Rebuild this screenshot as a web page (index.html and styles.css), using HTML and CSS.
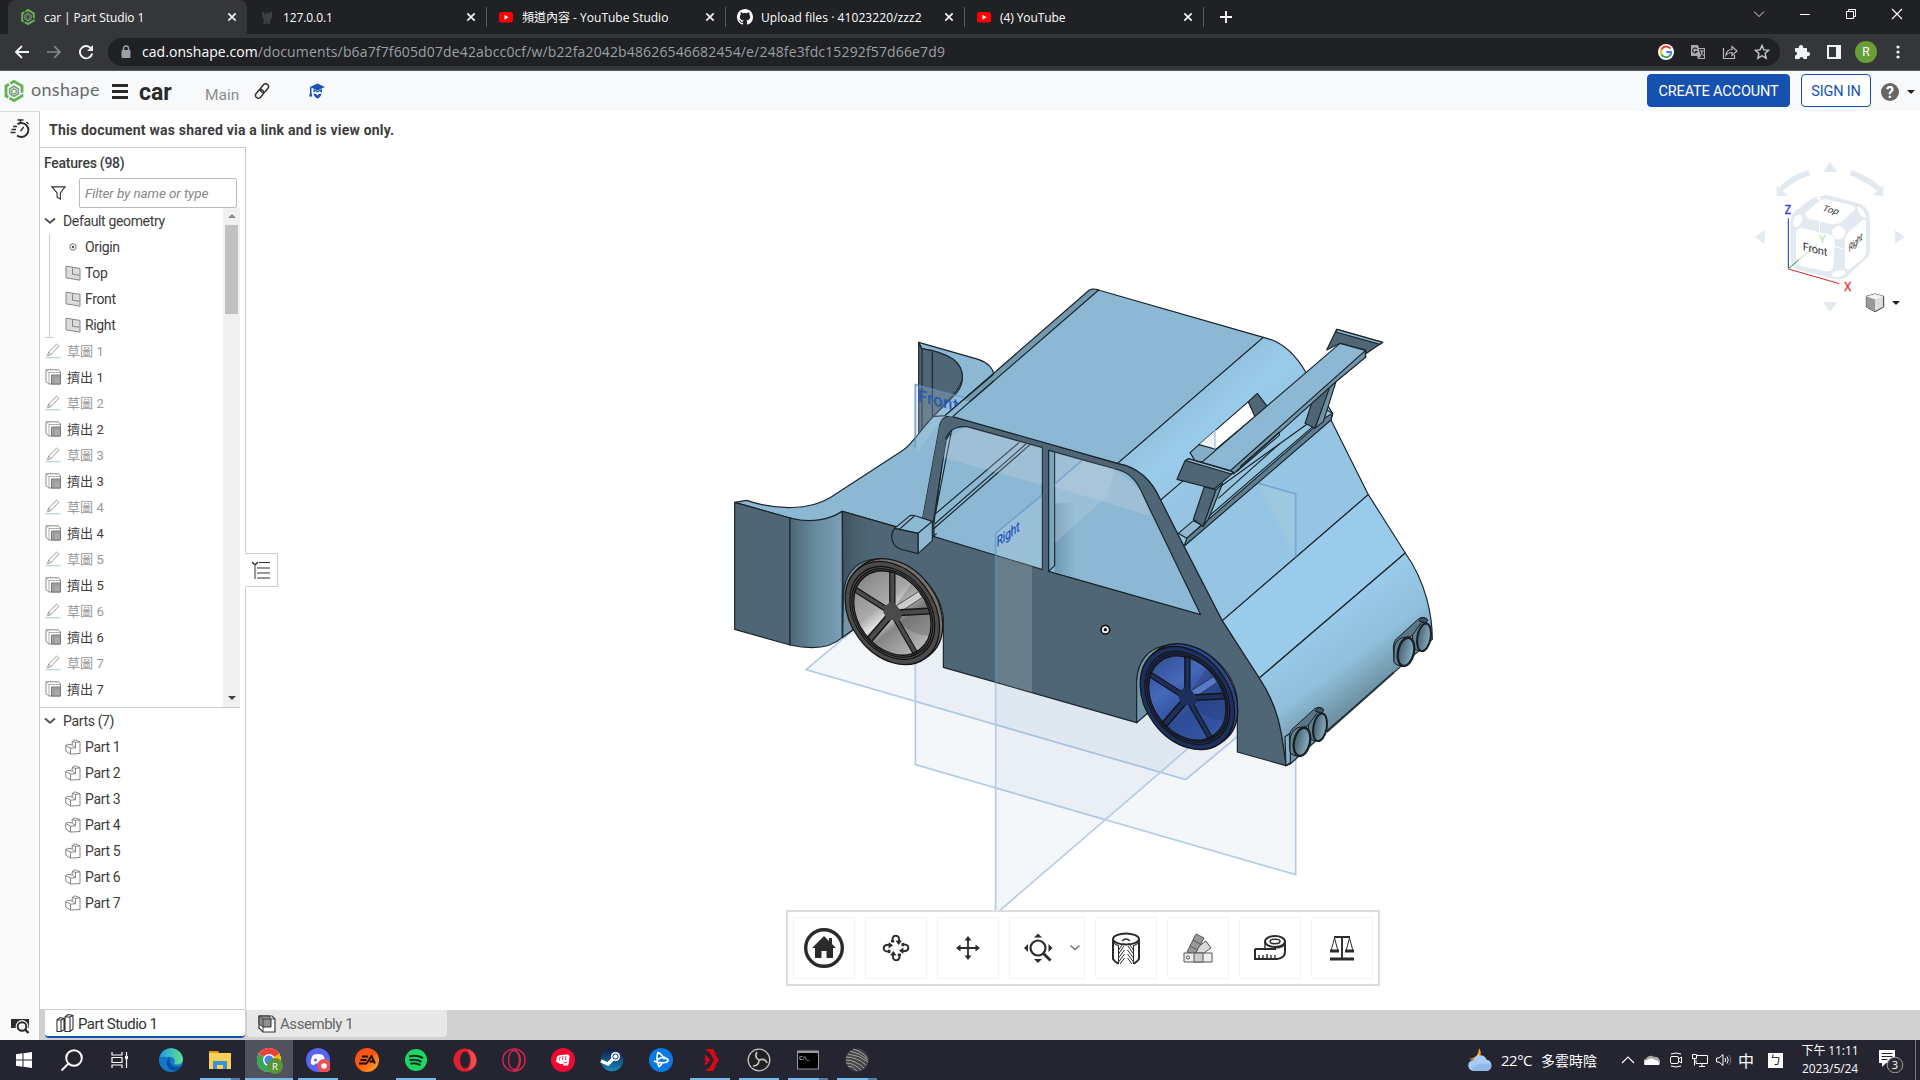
FILE: index.html
```
<!DOCTYPE html>
<html lang="zh-Hant">
<head>
<meta charset="utf-8">
<title>car | Part Studio 1</title>
<link rel="stylesheet" href="styles.css">
</head>
<body>
<svg class="defs" aria-hidden="true">
  <defs>
    <symbol id="i-close" viewBox="0 0 16 16"><path d="M4.3 4.3l7.4 7.4M11.7 4.3l-7.4 7.4" stroke="#f1f3f4" stroke-width="1.7"/></symbol>
    <symbol id="i-yt" viewBox="0 0 16 16"><rect x="1" y="3" width="14" height="10.5" rx="2.6" fill="#f00"/><path d="M6.5 5.8v5l4-2.500z" fill="#fff"/></symbol>
    <symbol id="i-onshape" viewBox="0 0 20 22"><path d="M10 1.400l8 4.700v9.800l-8 4.700-8-4.700V6.100z" fill="none" stroke="#5db647" stroke-width="2.800" stroke-dasharray="16 1.500"/><path d="M10 6.200l4.300 2.500v5L10 16.200l-4.300-2.500v-5z" fill="none" stroke="#8b9296" stroke-width="1.600"/><path d="M10 8.800l2.200 1.300v2.600L10 14l-2.200-1.300v-2.600z" fill="none" stroke="#57a845" stroke-width="1.200"/></symbol>
    <symbol id="i-plane" viewBox="0 0 16 16"><path d="M1 1.200l14 2.200v11.800L1 12.800z" fill="#dcdcdc" stroke="#858585"/><path d="M7.500 2.300v6.900l7 1.100" fill="none" stroke="#858585"/></symbol>
    <symbol id="i-sketch" viewBox="0 0 16 16"><path d="M2.500 12.800l1.200-3.900L11.500 1.200l2.400 2-8 8.400z M3.700 8.900l2.200 2.700" fill="none" stroke="#999"/><path d="M.5 14.800h15" stroke="#a9c3e8"/></symbol>
    <symbol id="i-extrude" viewBox="0 0 16 16"><path d="M1 .8H13.500l2 2.200V15H4L1 12.500z" fill="#fff" stroke="#888"/><path d="M1 .8l3 2.700V15M4 3.500H15" fill="none" stroke="#999" stroke-width=".8"/><path d="M6.500 6H15.500V15H6.500z" fill="#aaa" stroke="#777"/><path d="M8.500 15V8H15.500" fill="none" stroke="#888" stroke-width=".8"/></symbol>
    <symbol id="i-part" viewBox="0 0 16 16"><path d="M.8 6.500l2-1.200 4.400.7V2.500L10 .8l5 2v11.700l-9.500.6-4.700-3z M.8 6.500l4.700 2.700V15M5.500 9.200l5-.5V3.400L15 2.800M10.500 3.400L7.200 2.500M10.500 8.700L7.200 6" fill="#fff" stroke="#777" stroke-width=".9"/></symbol>
    <symbol id="i-chev" viewBox="0 0 12 8"><path d="M1 1.500l5 4.200 5-4.200" fill="none" stroke="#555" stroke-width="2"/></symbol>
    <linearGradient id="bump"><stop offset="0" stop-color="#4e6675"/><stop offset=".5" stop-color="#688b9f"/><stop offset="1" stop-color="#7aa0b7"/></linearGradient>
    <linearGradient id="tailg" gradientUnits="userSpaceOnUse" x1="1800" y1="1080" x2="1960" y2="1300"><stop offset="0" stop-color="#9acbea"/><stop offset=".6" stop-color="#8fbfda"/><stop offset="1" stop-color="#7093a5"/></linearGradient>
    <linearGradient id="glassg" gradientUnits="userSpaceOnUse" x1="1450" y1="360" x2="1620" y2="560"><stop offset="0" stop-color="#90c0dc"/><stop offset=".5" stop-color="#9acbea"/><stop offset="1" stop-color="#96c5e3"/></linearGradient>
    <linearGradient id="shade" x1="0" x2="1"><stop offset="0" stop-color="#35464f" stop-opacity=".6"/><stop offset="1" stop-color="#4e6675" stop-opacity="0"/></linearGradient>
    <linearGradient id="pillar" x1="0" x2="1"><stop offset="0" stop-color="#4e7386" stop-opacity=".45"/><stop offset="1" stop-color="#4e7386" stop-opacity="0"/></linearGradient>
    <linearGradient id="pipe"><stop offset="0" stop-color="#48606e"/><stop offset="1" stop-color="#8ab1c6"/></linearGradient>
    <linearGradient id="rimGrey" x1="0" y1="0" x2="1" y2="1"><stop offset="0" stop-color="#777"/><stop offset=".4" stop-color="#aaa"/><stop offset=".5" stop-color="#e0e0e0"/><stop offset=".6" stop-color="#858585"/><stop offset="1" stop-color="#d2d2d2"/></linearGradient>
    <linearGradient id="rimBlue" x1="0" y1="0" x2="1" y2="1"><stop offset="0" stop-color="#2c4685"/><stop offset=".35" stop-color="#4668bb"/><stop offset=".6" stop-color="#2d4c98"/><stop offset="1" stop-color="#3a5cae"/></linearGradient>
    <g id="wheel">
      <g transform="matrix(.95 .275 0 1 6 -6)"><circle r="150" class="w-side"/></g>
      <g transform="matrix(.95 .275 0 1 -3 1)">
        <circle r="149" class="w-tire"/><circle r="134" class="w-ring"/><circle r="128" class="w-tire"/><circle r="122" class="w-rim"/>
        <path d="M20 20A100 100 0 0 0 115 35A120 120 0 0 0 60 -104L8 -20Z" class="w-ring" opacity=".35"/>
        <path d="M12 -25L83 -87L95 -73L25 -10Z" class="w-light"/>
        <g class="w-spoke">
          <path d="M-8 -122H8V-16H-8z"/><path d="M-8 -122H8V-16H-8z" transform="rotate(72)"/><path d="M-8 -122H8V-16H-8z" transform="rotate(144)"/><path d="M-8 -122H8V-16H-8z" transform="rotate(216)"/><path d="M-8 -122H8V-16H-8z" transform="rotate(288)"/>
        </g>
        <path d="M-8 -30H8L27 -14 30 2 18 24 0 20 -15 28 -28 6 -27 -10z" class="w-hub"/>
      </g>
    </g>
    <g id="exhaust">
      <path d="M-35 -10Q-36 -34 -18 -45L40 -98Q52 -108 66 -98L62 -85L10 -40L0 45Q-30 42 -33 30Z" fill="#5b7686" stroke="#182026" stroke-width="3"/>
      <path d="M42 -92Q52 -110 68 -96L64 -86Z" fill="#3f5562" stroke="#182026" stroke-width="3"/>
      <path d="M22 -50L50 -88L66 -86L54 -2Q34 0 24 -14Z" fill="#64818f" stroke="#182026" stroke-width="3"/>
      <ellipse cx="57" cy="-43" rx="20" ry="42" transform="rotate(10 57 -43)" fill="url(#pipe)" stroke="#182026" stroke-width="6"/>
      <path d="M-33 0Q-34 -30 -10 -42L15 -45L0 44Q-30 42 -33 30Z" fill="#64818f" stroke="#182026" stroke-width="3"/>
      <ellipse cx="3" rx="24" ry="43" transform="rotate(12)" fill="url(#pipe)" stroke="#182026" stroke-width="7"/>
    </g>
  </defs>
</svg>

<header class="tabs">
  <div class="tab tab-on"><svg class="fav" viewBox="0 0 20 22"><use href="#i-onshape"/></svg><span>car | Part Studio 1</span><svg class="x"><use href="#i-close"/></svg></div>
  <div class="tab"><svg class="fav" viewBox="0 0 16 16"><path d="M3 3l2-1 1 4 2-3 3 2V2l2 1v6l-2 2v4H8v-3l-1 3H4l1-4-2-3z" fill="#3b3e42"/></svg><span>127.0.0.1</span><svg class="x"><use href="#i-close"/></svg></div>
  <div class="tab"><svg class="fav"><use href="#i-yt"/></svg><span class="mid">頻道內容 - YouTube Studio</span><svg class="x"><use href="#i-close"/></svg></div>
  <div class="tab"><svg class="fav" viewBox="0 0 16 16"><path fill="#fff" d="M8 0C3.580 0 0 3.580 0 8c0 3.540 2.290 6.530 5.470 7.590.4.070.55-.17.55-.38v-1.490c-2.010.37-2.530-.49-2.690-.94-.09-.23-.48-.94-.82-1.130-.28-.15-.68-.52-.01-.53.63-.01 1.080.58 1.230.82.720 1.210 1.870.87 2.330.66.070-.52.280-.87.510-1.070-1.780-.2-3.640-.89-3.640-3.950 0-.87.310-1.590.82-2.150-.08-.2-.36-1.020.08-2.120 0 0 .67-.21 2.200.82a7.600 7.600 0 0 1 4 0c1.530-1.040 2.200-.82 2.200-.82.440 1.100.160 1.920.080 2.120.510.560.820 1.270.820 2.150 0 3.070-1.870 3.750-3.650 3.950.29.250.540.730.540 1.480v2.200c0 .21.150.460.550.380A8 8 0 0 0 16 8c0-4.420-3.580-8-8-8z"/></svg><span class="wider">Upload files · 41023220/zzz2</span><svg class="x"><use href="#i-close"/></svg></div>
  <div class="tab"><svg class="fav"><use href="#i-yt"/></svg><span>(4) YouTube</span><svg class="x"><use href="#i-close"/></svg></div>
  <svg class="plus" viewBox="0 0 16 16"><path d="M8 2v12M2 8h12" stroke="#fff" stroke-width="1.800"/></svg>
  <div class="winctl">
    <svg viewBox="0 0 12 12"><path d="M1 3.500l5 5 5-5" fill="none" stroke="#ddd"/></svg>
    <svg viewBox="0 0 12 12"><path d="M1 6.500h10" stroke="#fff"/></svg>
    <svg viewBox="0 0 12 12"><path d="M1.500 3.500h7v7h-7zM3.500 3.500v-2h7v7h-2" fill="none" stroke="#fff"/></svg>
    <svg viewBox="0 0 12 12"><path d="M1 1l10 10M11 1L1 11" stroke="#fff" stroke-width="1.100"/></svg>
  </div>
</header>

<div class="nav">
  <svg viewBox="0 0 16 16"><path d="M15 8H2M8 2L2 8l6 6" fill="none" stroke="#f1f3f4" stroke-width="1.900"/></svg>
  <svg viewBox="0 0 16 16"><path d="M1 8h13M8 2l6 6-6 6" fill="none" stroke="#85878a" stroke-width="1.700"/></svg>
  <svg viewBox="0 0 16 16"><path d="M13.300 4.700A6.200 6.200 0 1 0 14.200 9.500" fill="none" stroke="#f1f3f4" stroke-width="1.900"/><path d="M15 1v6H9z" fill="#f1f3f4"/></svg>
  <div class="omni">
    <svg class="lock" viewBox="0 0 10 14"><rect x=".5" y="5" width="9" height="8" rx="1" fill="#9aa0a6"/><path d="M2.500 5V3.500a2.500 2.500 0 0 1 5 0V5" fill="none" stroke="#9aa0a6" stroke-width="1.500"/></svg>
    <div class="url"><b>cad.onshape.com</b>/documents/b6a7f7f605d07de42abcc0cf/w/b22fa2042b48626546682454/e/248fe3fdc15292f57d66e7d9</div>
    <svg viewBox="0 0 16 16"><circle cx="8" cy="8" r="8" fill="#fff"/><path d="M12.600 4.600A5.300 5.300 0 0 0 3.500 5.500" fill="none" stroke="#ea4335" stroke-width="2"/><path d="M3.500 5.500a5.300 5.300 0 0 0 0 5" fill="none" stroke="#fbbc05" stroke-width="2"/><path d="M3.500 10.500a5.300 5.300 0 0 0 8 1.500" fill="none" stroke="#34a853" stroke-width="2"/><path d="M11.500 12a5 5 0 0 0 1.600-4H8.200" fill="none" stroke="#4285f4" stroke-width="2"/></svg>
    <svg viewBox="0 0 16 16"><path d="M1 1h7l1 3h6v11H8l-1-3H1z" fill="#aaa"/><path d="M9 5h5v9H9l2-2-2-6z" fill="#292a2d"/><path d="M7 5.200A2.300 2.300 0 1 0 7 7.500H5" fill="none" stroke="#222" stroke-width="1.100"/><path d="M10 7h4M12 6v1c0 3-1 4-2 5m1-4l3 4" stroke="#aaa" fill="none"/></svg>
    <svg viewBox="0 0 16 16"><path d="M1.500 4v10.500h11V11M4 11c.5-4 3-5.500 6-5.500V2.500l5 4.500-5 4.500V8.500C7.500 8.400 5.500 9 4 11z" fill="none" stroke="#b9bbbe" stroke-width="1.200"/></svg>
    <svg viewBox="0 0 16 16"><path d="M8 1.500l1.900 4.400 4.800.4-3.600 3.200 1.100 4.700L8 11.700l-4.200 2.500 1.100-4.700-3.600-3.200 4.800-.4z" fill="none" stroke="#c6c8ca" stroke-width="1.400"/></svg>
  </div>
  <svg viewBox="0 0 16 16"><path d="M1 4h4a2.200 2.200 0 1 1 4 0h4v4a2.200 2.200 0 1 1 0 4v3H9.500a2 2 0 1 0-4 0H1v-3.500a2 2 0 1 0 0-4z" fill="#f1f3f4"/></svg>
  <svg viewBox="0 0 16 16"><path d="M1 1h14v14H1zM3 3v10h7V3z" fill="#f1f3f4" fill-rule="evenodd"/></svg>
  <div class="avatar">R</div>
  <svg viewBox="0 0 16 16" fill="#f1f3f4"><circle cx="8" cy="3" r="1.600"/><circle cx="8" cy="8" r="1.600"/><circle cx="8" cy="13" r="1.600"/></svg>
</div>

<div class="apphead">
  <svg class="logo"><use href="#i-onshape"/></svg>
  <span class="brand">onshape</span>
  <svg class="burger" viewBox="0 0 16 15"><path d="M0 1.500h16M0 7.500h16M0 13.500h16" stroke="#2b2b2b" stroke-width="2.800"/></svg>
  <span class="doc">car</span>
  <span class="branch">Main</span>
  <svg class="link" viewBox="0 0 16 16"><g fill="none" stroke="#333" stroke-width="1.500" transform="rotate(-50 8 8)"><rect x="-.5" y="5.200" width="9.500" height="5.600" rx="2.800"/><rect x="7" y="5.200" width="9.500" height="5.600" rx="2.800"/></g></svg>
  <svg class="cap" viewBox="0 0 16 16" fill="#1b53b1"><path d="M8.500.5L16 4 8.500 7.500 1 4zM1 4l1.500.8V10l.8 3.500H0L1 10z"/><path d="M4.500 6l4 2 4.500-2v3.500l-2.500-1.200-2 1.200-2-1.200-2 1.200z"/><path d="M4.500 10.500l2.500.5 1.500 1.500L10 11l2.500-.5Q12 14 8.500 15.500 5 14 4.500 10.500z"/></svg>
  <span class="btn btn-fill">CREATE ACCOUNT</span>
  <span class="btn btn-line">SIGN IN</span>
  <span class="help">?</span>
  <i class="caret"></i>
</div>

<div class="app">
  <aside class="rail">
    <svg viewBox="0 0 20 20"><path d="M7.500 5.200a7 7 0 1 1-.5 11.300" fill="none" stroke="#2b2b2b" stroke-width="1.900"/><path d="M7.500 1h6M10.500 1v3M16.500 3l2 2M10.500 12l3.200-4M3 7.500h4M1.500 10.500h4.500M.5 13.500h5" fill="none" stroke="#2b2b2b" stroke-width="1.400"/></svg>
    <svg viewBox="0 0 20 18"><path d="M1 2h18v9H1z" fill="#2b2b2b"/><circle cx="12" cy="9.500" r="6.400" fill="#fafafa"/><circle cx="12" cy="9.500" r="4.300" fill="none" stroke="#2b2b2b" stroke-width="2"/><path d="M15 12.500l3.500 3.500" stroke="#2b2b2b" stroke-width="2.400"/></svg>
  </aside>
  <div class="main">
    <div class="notice">This document was shared via a link and is view only.</div>
    <div class="work">
      <section class="panel">
        <div class="ptitle">Features (98)</div>
        <div class="filter"><svg viewBox="0 0 16 16"><path d="M1 1.500h14L10 8v6.500l-3.500-2V8z" fill="none" stroke="#333" stroke-width="1.200"/></svg><div class="field">Filter by name or type</div></div>
        <div class="listwrap">
          <div class="list">
            <div class="row head"><svg class="chev"><use href="#i-chev"/></svg>Default geometry</div>
            <div class="geo">
              <div class="row sub"><svg viewBox="0 0 16 16"><circle cx="8" cy="8" r="3.200" fill="none" stroke="#777"/><circle cx="8" cy="8" r="1.300" fill="#555"/></svg>Origin</div>
              <div class="row sub"><svg><use href="#i-plane"/></svg>Top</div>
              <div class="row sub"><svg><use href="#i-plane"/></svg>Front</div>
              <div class="row sub"><svg><use href="#i-plane"/></svg>Right</div>
            </div>
            <div class="row cjk dim"><svg><use href="#i-sketch"/></svg>草圖 1</div>
            <div class="row cjk"><svg><use href="#i-extrude"/></svg>擠出 1</div>
            <div class="row cjk dim"><svg><use href="#i-sketch"/></svg>草圖 2</div>
            <div class="row cjk"><svg><use href="#i-extrude"/></svg>擠出 2</div>
            <div class="row cjk dim"><svg><use href="#i-sketch"/></svg>草圖 3</div>
            <div class="row cjk"><svg><use href="#i-extrude"/></svg>擠出 3</div>
            <div class="row cjk dim"><svg><use href="#i-sketch"/></svg>草圖 4</div>
            <div class="row cjk"><svg><use href="#i-extrude"/></svg>擠出 4</div>
            <div class="row cjk dim"><svg><use href="#i-sketch"/></svg>草圖 5</div>
            <div class="row cjk"><svg><use href="#i-extrude"/></svg>擠出 5</div>
            <div class="row cjk dim"><svg><use href="#i-sketch"/></svg>草圖 6</div>
            <div class="row cjk"><svg><use href="#i-extrude"/></svg>擠出 6</div>
            <div class="row cjk dim"><svg><use href="#i-sketch"/></svg>草圖 7</div>
            <div class="row cjk"><svg><use href="#i-extrude"/></svg>擠出 7</div>
          </div>
          <div class="scroll"><i class="up"></i><div class="thumb"></div><i class="down"></i></div>
        </div>
        <div class="parts">
          <div class="row head"><svg class="chev"><use href="#i-chev"/></svg>Parts (7)</div>
          <div class="row sub"><svg><use href="#i-part"/></svg>Part 1</div>
          <div class="row sub"><svg><use href="#i-part"/></svg>Part 2</div>
          <div class="row sub"><svg><use href="#i-part"/></svg>Part 3</div>
          <div class="row sub"><svg><use href="#i-part"/></svg>Part 4</div>
          <div class="row sub"><svg><use href="#i-part"/></svg>Part 5</div>
          <div class="row sub"><svg><use href="#i-part"/></svg>Part 6</div>
          <div class="row sub"><svg><use href="#i-part"/></svg>Part 7</div>
        </div>
      </section>
      <section class="view">
        <div class="toggle"><svg viewBox="0 0 18 18"><path d="M0 1l3 3 3-3" fill="none" stroke="#333" stroke-width="1.500"/><path d="M3 5v13" stroke="#999" stroke-width="2"/><path d="M7 1.500h11M5 7h13M5 12h13M5 17h13" stroke="#333" stroke-width="1.200"/></svg></div>

        <svg class="model" viewBox="0 0 2400 2010">
          <g class="planes">
            <path d="M318 1199L700 880 1840 1210 1457 1529Z"/>
            <path d="M646 344L1787 672V1814L646 1484Z"/>
            <path d="M887 790L1461 300V1438L887 1932Z"/>
          </g>
          <g class="ink">
            <path class="lt" d="M104 697L140 691C230 722 330 720 390 683L610 540C640 520 665 475 697 440L790 380 1253 580 1520 1040 1000 930 697 802 427 724C380 755 320 760 270 744Z"/>
            <path class="lt" d="M656 217L835 268C865 278 880 298 881 312L735 437 697 440C760 380 787 362 787 325C787 270 730 250 665 236Z"/>
            <path class="dk" d="M656 217L665 236C760 250 790 285 787 325C780 370 720 410 656 490Z"/>
            <path class="nf" d="M666 236V478M697 247V440"/>
            <path class="dk" d="M104 697L270 744V1125L104 1078Z"/>
            <path d="M270 744C330 760 390 750 427 724V1102C395 1132 340 1140 270 1125Z" fill="url(#bump)"/>
            <path d="M1310 1358V1235C1312 1180 1340 1130 1410 1124L1500 1200 1400 1280Z" class="md"/>
            <path d="M427 980Q430 880 520 865L560 960 500 1050 427 1102Z" class="md"/>
            <path class="dk" d="M427 724L668 793V745L720 462Q725 438 752 438L1253 580C1320 592 1360 640 1382 690L1453 830 1567 1052 1678 1224C1735 1310 1745 1380 1758 1487L1612 1446V1290C1600 1190 1500 1110 1410 1125C1340 1130 1312 1180 1310 1235V1358L730 1192V1040C715 940 610 855 520 868C460 875 432 920 430 980Z"/>
            <path d="M1310 1235C1312 1180 1340 1130 1410 1125L1480 1180 1400 1280 1310 1358Z" class="md"/>
            <path d="M430 980C432 920 460 875 520 868L560 960 500 1050 428 1102Z" class="md"/>
            <path d="M429 726L530 755V870C470 870 430 920 430 980Z" fill="url(#shade)" stroke="none"/>
            <path class="lt" d="M738 435L1175 58 1195 60 1690 202 1253 580 752 438Z"/>
            <path d="M735 437L1168 60Q1180 54 1196 60L758 440Z" fill="#7399ae"/>
            <path d="M1690 202C1750 215 1790 260 1817 306L1898 430 1893 450 2005 674 1567 1052 1453 830 1382 690C1360 640 1320 592 1253 580Z" fill="url(#glassg)"/>
            <path d="M2005 674L2116 849 1678 1224 1567 1052Z" fill="#9acbea"/>
            <path d="M2116 849C2180 940 2197 1040 2197 1108L2082 1207 1880 1383 1771 1482 1758 1487C1745 1380 1735 1310 1678 1224Z" fill="url(#tailg)"/>
            <path d="M1758 1487L1771 1478V1390L1755 1400Z" fill="#85b1ca"/>
            <path class="lt" d="M702 800V758L735 512C745 480 765 468 800 470L1027 533V898Z"/>
            <path class="lt" d="M1046 541L1245 597C1290 605 1310 635 1322 660L1502 1034 1046 904Z"/>
            <path d="M1064 700H1130V925L1064 905Z" fill="url(#pillar)" stroke="none"/>
            <path class="nf" d="M755 480L706 732M738 510L750 490M700 757L738 512M708 730L958 517M700 777L990 524M704 762L978 522M697 802L710 790"/>
            <path d="M1046 541L1064 546V887L1046 904Z" fill="#7da5bb"/>
          </g>
          <path d="M750 500L800 470 1027 533V645L720 560ZM1064 546L1245 597 1322 660 1350 738 1064 650Z" fill="#e3dce9" opacity=".22"/>
          <path d="M887 790L1027 675V898L887 856ZM1064 640L1145 572 1245 597 1220 680 1064 820Z" fill="#c8d9e5" opacity=".24"/>
          <path d="M887 856L996 888V1268L887 1237Z" fill="#c8d0d4" opacity=".22"/>
          <path d="M1675 640L1787 672V862Z" fill="#a9cddd" opacity=".4"/>
          <path d="M646 344L795 384 735 440 655 540H646Z" fill="#bcd2e6" opacity=".25"/>
          <g class="pl"><path d="M646 535V344L795 384M887 1240V790L1027 675M1066 640L1145 572M1675 640L1787 672V862"/></g>

          <text class="plabel" transform="matrix(1 .24 0 1 653 394)" font-size="49" textLength="122">Front</text>
          <text class="plabel" transform="matrix(.82 -.6 0 1 890 832)" font-size="43" textLength="84" lengthAdjust="spacingAndGlyphs">Right</text>
          <g class="ink">
            <path class="lt" d="M735 437L790 390 830 400 758 440Z" stroke="none"/>
            <path class="nf" d="M735 437L881 312M758 440L881 333"/>
            <path class="dk" d="M668 745L720 462 738 510 695 752Z" stroke="none"/>
            <path class="lt" d="M584 775L630 737Q638 734 648 738L697 754 654 790Z"/>
            <path class="lt" d="M654 790L697 754V812L654 851Z"/>
            <path class="dk" d="M584 775L654 790V851L600 837Q575 825 575 800Q575 785 584 775Z"/>
            <path class="nf" d="M597 779L643 738"/>
            <path d="M1497 524L1645 395 1668 437 1545 540Z" fill="#fff"/>
            <path d="M1497 524L1545 482V540Z" fill="#eef3f8" stroke="none"/>
            <path d="M1470 548L1497 524 1555 540 1510 577 1485 572Z" fill="#84aec5"/>
            <path class="dk" d="M1645 395L1672 370 1702 410 1665 440Z"/>
            <path class="nf" d="M1382 690L1450 632"/>
            <path d="M1435 790L1480 752 1505 765 1460 805Z" fill="#8fbad2"/>
            <path d="M1525 740L1850 460 1862 475 1898 430 1880 420 1560 650Z" fill="#96c5e0"/>
            <path d="M1453 828L1460 805 1880 440 1898 430 1893 450Z" fill="#5f7f91"/>
            <path d="M1555 685L1740 520" class="nf"/>
            <path class="dk" d="M1513 650L1548 660 1510 770 1480 748Z"/>
            <path d="M1548 660L1568 640 1525 748 1510 768Z" fill="#6e91a5"/>
            <path class="dk" d="M1835 400L1895 345 1845 475 1815 460Z"/>
            <path d="M1890 350L1908 335 1870 455 1845 475Z" fill="#6e91a5"/>
            <path class="dk" d="M1910 178L2048 217 1970 270 1997 262V240L1920 220 1880 240Z"/>
            <path d="M1908 186L1911 178 2048 217 2040 223Z" fill="#8fbad2"/>
            <path d="M1505 577L1920 220 1996 241V262L1908 335 1600 604Z" class="lt"/>
            <path d="M1590 603L1996 242V262L1908 335 1600 612Z" fill="#6f96aa"/>
            <path class="nf" d="M1610 605L1738 496V486L1620 590"/>
            <path class="dk" d="M1455 572L1465 566 1600 608 1543 657 1431 628Z"/>
            <path d="M1457 572L1465 566 1600 606 1594 612Z" fill="#8fbad2"/>
          </g>
          <path d="M1545 480V536" stroke="#a8c2e2" stroke-width="4"/>
          <path d="M1880 1386L2082 1207" stroke="#26363f" stroke-width="6"/>
          <use href="#exhaust" x="2115" y="1145"/>
          <use href="#exhaust" x="1803" y="1415"/>
          <use href="#wheel" class="grey" x="580" y="1028"/>
          <use href="#wheel" class="blue" x="1465" y="1283"/>
          <circle cx="1216" cy="1079" r="13" fill="#eee" stroke="#111" stroke-width="5"/><circle cx="1216" cy="1079" r="5" fill="#111"/>
        </svg>

        <svg class="cube" viewBox="570 480 480 465">
          <g fill="#e2e9f0">
            <path d="M788 516L810 486 832 516zM788 906H832L810 936zM614 690V732L585 711zM1005 690V732L1034 711z"/>
            <path d="M650 553L656 563Q690 525 745 510L750 526Q705 540 668 574L684 586 650 588zM970 553L964 563Q930 528 875 510L870 526Q915 542 952 574L936 586 970 588z"/>
            <path d="M692 655Q696 640 710 630L755 596Q765 590 775 590L800 585 890 608Q930 620 930 660V750Q930 768 915 778L860 830Q848 840 830 838L715 810Q692 800 692 780z"/>
          </g>
          <g fill="#fff">
            <path d="M740 635L775 605Q785 597 800 598L870 614Q895 620 880 634L845 665Q832 675 810 672L750 657Q730 650 740 635z"/>
            <path d="M708 698Q710 682 730 685L805 703Q825 710 824 725L820 795Q820 815 800 814L730 800Q708 793 708 780z"/>
            <path d="M855 718Q857 704 868 694L905 662Q917 654 918 668V755Q918 768 907 778L870 806Q856 813 855 798z"/>
            <circle cx="836" cy="698" r="20"/><ellipse cx="713" cy="662" rx="12" ry="20" transform="rotate(25 713 662)"/><ellipse cx="836" cy="821" rx="21" ry="10" transform="rotate(-12 836 821)"/><ellipse cx="905" cy="637" rx="7" ry="20" transform="rotate(-35 905 637)"/>
            <path d="M777 663h3v32h-3zM822 738l32 8v3l-32-8zM770 596l8-8 6 8-8 6z"/>
          </g>
          <path d="M685 655V806" stroke="#2222dd" stroke-width="3"/><path d="M685 807L838 851" stroke="#e02222" stroke-width="3"/><path d="M685 806L772 733" stroke="#b4e0b4" stroke-width="3"/><path d="M685 806L716 780" stroke="#2ca02c" stroke-width="3"/>
          <text x="674" y="641" fill="#3838e0" stroke="#3838e0" font-size="36" textLength="19" lengthAdjust="spacingAndGlyphs">Z</text><text x="852" y="872" fill="#e04040" stroke="#e04040" font-size="36" textLength="22" lengthAdjust="spacingAndGlyphs">X</text><text x="777" y="729" fill="#b4e0b4" font-size="34">Y</text>
          <text transform="matrix(1 .25 0 1 728 750)" font-size="33" fill="#333" textLength="74">Front</text>
          <text transform="matrix(.95 .24 -.5 .8 784 632)" font-size="30" fill="#333">Top</text>
          <text transform="matrix(.62 -.58 0 1 866 757)" font-size="32" fill="#333" textLength="67">Right</text>
          <path d="M919 889L945 882 971 889V921L945 935 919 921z" fill="#ddd" stroke="#333" stroke-width="3"/><path d="M919 889L945 898V935L919 921z" fill="#999"/><path d="M919 889L945 882 971 889 945 898z" fill="#f4f4f4"/>
          <path d="M996 903h24l-12 12z" fill="#222"/>
        </svg>

        <div class="tools">
          <div><svg viewBox="0 0 44 44"><circle cx="22" cy="22" r="18.300" fill="#fff" stroke="#2b2b2b" stroke-width="3.400"/><path d="M22 10L10 22h3v10h6.500v-7h5v7H31V22h3l-4-4v-6h-3v3z" fill="#2b2b2b"/></svg></div>
          <div><svg viewBox="0 0 44 44"><g id="orb"><path d="M18.500 15Q18 10 21.500 9.700Q25.500 9.500 25.200 15.500" fill="none" stroke="#2b2b2b" stroke-width="2"/><path d="M21.500 14.500l6.500.3-3.500 4.200zM16.800 14h3.400v2.500h-3z" fill="#2b2b2b"/></g><use href="#orb" transform="rotate(90 22 22)"/><use href="#orb" transform="rotate(180 22 22)"/><use href="#orb" transform="rotate(270 22 22)"/></svg></div>
          <div><svg viewBox="0 0 44 44"><path d="M22 12v20M12 22h20" stroke="#2b2b2b" stroke-width="1.800"/><path d="M22 10l3.500 4.500h-7zM22 34l3.500-4.500h-7zM10 22l4.500-3.500v7zM34 22l-4.500-3.500v7z" fill="#2b2b2b"/></svg></div>
          <div class="wide"><svg viewBox="0 0 44 44"><circle cx="22" cy="22" r="7.500" fill="none" stroke="#2b2b2b" stroke-width="2.200"/><path d="M27.500 27.500l7 7" stroke="#2b2b2b" stroke-width="2.800"/><path d="M22 7.500l4 4h-8zM22 37l4-4h-8zM8 22l4-4v8zM36.500 22l-4-4v8z" fill="#2b2b2b"/></svg><svg class="dd" viewBox="0 0 12 8"><path d="M1.500 1.500l4.500 4 4.500-4" fill="none" stroke="#777" stroke-width="1.600"/></svg></div>
          <div><svg viewBox="0 0 44 44" fill="none" stroke="#2b2b2b"><path d="M9 13v20q2 3 5 4.500M35 13v20q-2 3-5 4.500" stroke-width="2"/><ellipse cx="22" cy="13" rx="13" ry="5.500" stroke-width="1.800"/><path d="M9 14q1 5 6 5.500M35 14q-1 5-6 5.500M18 15q4-4 8 0" stroke-width="1.200"/><path d="M14.500 24l5-7M14.500 28l5.500-8M14.500 32l6-8M14.500 36l6-8M16 38l4.500-6M29.500 24l-5-7M29.500 28l-5.500-8M29.500 32l-6-8M29.500 36l-6-8M28 38l-4.500-6M14.500 19v19M29.500 19v19" stroke-width="1"/></svg></div>
          <div><svg viewBox="0 0 44 44" stroke="#555"><path d="M14 26L30 15l5 7-10 7z" fill="#d8d8d8"/><path d="M11 26L20 8l8 4-9 16z" fill="#999"/><path d="M17 14l9 5M14 20l8 4" fill="none"/><path d="M8 27h28v9H8z" fill="#eee"/><path d="M18 27h9v9h-9z" fill="#ccc"/><circle cx="12" cy="31.500" r="1.600" fill="none"/></svg></div>
          <div><svg viewBox="0 0 44 44" fill="none" stroke="#2b2b2b" stroke-width="2"><path d="M7 23h20v-2M7 23v10h22q8-1 8-7V15"/><ellipse cx="27" cy="15.500" rx="10" ry="5.500"/><ellipse cx="27" cy="15.500" rx="5" ry="2.200" stroke-width="1.500"/><path d="M17 15v8M37 16q0 6-10 6M11 29v3M15 29v3M19 28v4M23 29v3M27 29v3" stroke-width="1.400"/></svg></div>
          <div><svg viewBox="0 0 44 44" fill="none" stroke="#2b2b2b"><path d="M22 11v22M14 11h16" stroke-width="1.900"/><path d="M10 33h24M10 25h9M25 25h9" stroke-width="2.800"/><path d="M14.500 12l-3.500 13M14.500 12l3.500 13M29.500 12l-3.500 13M29.500 12l3.500 13" stroke-width="1"/></svg></div>
        </div>
      </section>
    </div>
    <footer class="sheets">
      <div class="sheet on"><svg viewBox="0 0 18 18"><path d="M1 6l3-2.500 4 1V16l-3 1.500H1zM1 6h4v11.500M5 6l3-1.500M9 3l3-2.500 5 1V15l-3 2.500H9zM9 3h5v14.500M14 3l3-1.500" fill="#fff" stroke="#333" stroke-width="1.100"/></svg><span>Part Studio 1</span></div>
      <div class="sheet"><svg viewBox="0 0 18 18"><path d="M1 1h13l3 3v13H5l-4-4z" fill="#fff" stroke="#333" stroke-width="1.200"/><path d="M1 1h10l2 3v8H5L1 9z" fill="#909090" stroke="#333"/><path d="M1 1l4 3v13M5 4h12" fill="none" stroke="#444"/></svg><span>Assembly 1</span></div>
    </footer>
  </div>
</div>

<footer class="taskbar">
  <div class="tk"><svg viewBox="0 0 24 24" fill="#fff"><path d="M4 6.300l6.500-1v6.200H4zM11.500 5.200L20 4v7.500h-8.500zM4 12.500h6.500v6.200L4 17.800zM11.500 12.500H20V20l-8.500-1.200z"/></svg></div>
  <div class="tk"><svg viewBox="0 0 24 24" fill="none" stroke="#fff" stroke-width="2"><circle cx="14" cy="10" r="7.800"/><path d="M8.500 15.500L1.500 22.500"/></svg></div>
  <div class="tk"><svg viewBox="0 0 24 24" fill="none" stroke="#fff" stroke-width="1.200"><path d="M4 4v3h10V4M4 20v-3h10v3M4 9.500h10v5H4zM18.500 4v16"/><path d="M17 8h3v3h-3z" fill="#fff" stroke="none"/></svg></div>
  <div class="tk"><svg viewBox="0 0 24 24"><defs><linearGradient id="eg"><stop stop-color="#1b9de2"/><stop offset="1" stop-color="#5fe08c"/></linearGradient></defs><circle cx="12" cy="12" r="12" fill="#1277c9"/><path d="M.3 10A12 12 0 0 1 24 11c0 4-3 6-7 5.500-2-.3-2-1-1.500-2 1-3-1-5.500-4.500-5.500C7 9 1 8 .3 10z" fill="url(#eg)"/><path d="M11 9c-4 2-5 9 1 13 4 1.500 8 0 10-4-7 3-13-1-11-9z" fill="#0c4da2"/></svg></div>
  <div class="tk run two"><svg viewBox="0 0 24 24"><path d="M1 3h9l2 3H1z" fill="#e09b12"/><path d="M1 5h22v16H1z" fill="#fbcf5a"/><path d="M5 21v-8h14v8h-4v-4H9v4z" fill="#3a91dc"/></svg></div>
  <div class="tk run active"><svg viewBox="0 0 28 28"><circle cx="12" cy="12" r="12" fill="#fff"/><path d="M12 12L1.600 6A12 12 0 0 1 22.400 6z" fill="#ea4335"/><path d="M12 12L1.600 6A12 12 0 0 0 12 24z" fill="#34a853"/><path d="M12 12L22.400 6A12 12 0 0 1 12 24z" fill="#fbbc05"/><circle cx="12" cy="12" r="6" fill="#fff"/><circle cx="12" cy="12" r="4.600" fill="#4285f4"/><circle cx="18" cy="18" r="8" fill="#5b9434"/><text x="18" y="21.500" text-anchor="middle" font-size="9.500" fill="#fff">R</text></svg></div>
  <div class="tk run"><svg viewBox="0 0 24 24"><circle cx="12" cy="12" r="12" fill="#5865f2"/><path d="M7 7q5-2 10 0 3 5 2 9l-3 1.500-1-2H9l-1 2L5 16q-1-4 2-9z" fill="#fff"/><circle cx="9.500" cy="12" r="1.500" fill="#5865f2"/><circle cx="18" cy="18" r="7" fill="#ed4f57"/><circle cx="18" cy="18" r="2.800" fill="#fff"/></svg></div>
  <div class="tk"><svg viewBox="0 0 24 24"><defs><linearGradient id="ea" x2="1" y2="1"><stop stop-color="#f04a20"/><stop offset=".5" stop-color="#ff5a10"/><stop offset="1" stop-color="#ffb030"/></linearGradient></defs><circle cx="12" cy="12" r="12" fill="url(#ea)"/><path d="M7 8.500h6M5.500 12h6M4 15.500h7.500l5-7.500 3.500 7.500M14.500 13.500h4" fill="none" stroke="#111" stroke-width="1.800"/></svg></div>
  <div class="tk run"><svg viewBox="0 0 24 24"><circle cx="12" cy="12" r="11" fill="#1ed760"/><path d="M5 8.500q7-2 14 1.500M5.500 12.300q6-1.800 12 1.500M6.500 15.800q5-1.300 10 1.200" fill="none" stroke="#182a20" stroke-width="2"/></svg></div>
  <div class="tk"><svg viewBox="0 0 24 24"><circle cx="12" cy="12" r="11.500" fill="#e41c34"/><ellipse cx="12" cy="12" rx="5" ry="8.500" fill="#24262f"/><path d="M14 1q9 3 9.500 11T14 23q4-4 4-11T14 1z" fill="#f04a4a"/></svg></div>
  <div class="tk"><svg viewBox="0 0 24 24" fill="none" stroke="#df2450" stroke-width="1.300"><circle cx="12" cy="12" r="11.200"/><ellipse cx="12" cy="12" rx="5.500" ry="9.500"/><path d="M13 2q7 4 5 13t-6 7"/></svg></div>
  <div class="tk"><svg viewBox="0 0 24 24"><circle cx="12" cy="12" r="12" fill="#f00a32"/><path d="M6 8.500l3-1.500 8-.5 1.500 1.500-.5 6-1 3.500h-5l.5-1.500H9L5 13.500z" fill="#fff"/><path d="M9 8.500l-.5 4M12 8l-.5 4M15 8l-.5 4M12.500 15l4-1" stroke="#f00a32" stroke-width=".8"/></svg></div>
  <div class="tk"><svg viewBox="0 0 24 24"><defs><linearGradient id="st" x2="0" y2="1"><stop stop-color="#101b45"/><stop offset="1" stop-color="#1689bf"/></linearGradient></defs><circle cx="12" cy="12" r="11.300" fill="url(#st)"/><path d="M1 13l7 3 7-7" stroke="#fff" stroke-width="3.500" fill="none"/><circle cx="15.500" cy="8.500" r="4.500" fill="#fff"/><circle cx="15.500" cy="8.500" r="2.600" fill="#fff" stroke="#17295a"/></svg></div>
  <div class="tk"><svg viewBox="0 0 24 24" fill="none" stroke="#fff" stroke-width="1.700"><circle cx="12" cy="12" r="12" fill="#0b79e3" stroke="none"/><path d="M10 19Q6.500 11 9 4.500q4 1.500 6.500 7M5 13q5 2.500 11 1.500 3.500-.8 3-2.500-1-2-5-3M8 12q4-3 8-3M14 14q-2 3-4 5"/></svg></div>
  <div class="tk run"><svg viewBox="0 0 24 24"><path d="M7 1h8l3 5-3 1-4-3zM12 5l5 1 4 6-4 6-5 1 4-7zM15 17l3 1-3 5H7l4-3zM6 7l3 1 3 4-3 4-3 1 2-4-3-3 3 1z" fill="#e00613"/></svg></div>
  <div class="tk run"><svg viewBox="0 0 24 24" fill="none" stroke="#c4c4c4"><circle cx="12" cy="12" r="10.800" fill="#202023" stroke-width="1.300"/><path d="M12 12q-5-3-2-8M12 12q6-2 8 3M12 12q0 6-6 6" stroke-width="1.600"/></svg></div>
  <div class="tk run two"><svg viewBox="0 0 24 24"><path d="M1 2.500h22v19H1z" fill="#999"/><path d="M2 5h20v15.500H2z"/><text x="3" y="11.500" font-size="6" fill="#fff">C:\_</text></svg></div>
  <div class="tk run two"><svg viewBox="0 0 24 24"><circle cx="12" cy="12" r="11.500" fill="#444"/><g fill="none" stroke="#b0b0b0" stroke-width=".9"><path d="M8 1q10 3 14 9M5 3q10 2 18 9M3 6q11 1 20 8M1 9q11 0 20 8M1 12q9 0 18 8M1 15q8 0 15 7M3 18q5 0 9 5"/></g></svg></div>
  <div class="weather">
    <svg viewBox="0 0 26 24"><path d="M11 0q4 6-1 10-5 3-9 1 6-1 8-4 2-3 2-7z" fill="#f6a623"/><path d="M6 23a5.500 5.500 0 0 1-.5-11 7 7 0 0 1 13-.5A6 6 0 0 1 19.500 23z" fill="#a9cbf5"/><path d="M4 20q9-7 20-3-1 6-6 6H6z" fill="#7fabe6" opacity=".6"/></svg>
    <span>22°C</span><span class="cond">多雲時陰</span>
  </div>
  <div class="tray">
    <svg viewBox="0 0 16 16"><path d="M2 11l6-6 6 6" fill="none" stroke="#fff" stroke-width="1.200"/></svg>
    <svg viewBox="0 0 16 16"><path d="M2 13a3 3 0 0 1 0-6 5 5 0 0 1 8-2 5 5 0 0 1 5 8z" fill="#aaa"/><path d="M1 13a3 3 0 0 1 2-5 6 6 0 0 1 8 0 4 4 0 0 1 4 5z" fill="#fff"/></svg>
    <svg viewBox="0 0 16 16" fill="none" stroke="#fff"><rect x="2.500" y="4.500" width="8" height="7" rx="1.500"/><path d="M10.500 7l3-2v6l-3-2M3 2q5-2 10 0M3 14q5 2 10 0"/></svg>
    <svg viewBox="0 0 16 16" fill="none" stroke="#fff"><path d="M5 3.500h10.500v8H4V8M7 14.500h6M10 11.500v3M.5 2.500h4v4h-4zM2.500 6.500v7"/></svg>
    <svg viewBox="0 0 16 16" fill="none" stroke="#fff"><path d="M.5 6h2.500l4-3.500v11L3 10H.5z"/><path d="M9 6q1.500 2 0 4M11 4.500q2.500 3.500 0 7"/><path d="M13 3q3.500 5 0 10" stroke="#777"/></svg>
    <span class="ime">中</span>
    <span class="bopo">ㄅ</span>
  </div>
  <div class="clock"><span>下午 11:11</span><span>2023/5/24</span></div>
  <div class="note"><svg viewBox="0 0 26 26"><path d="M1 3h16v13H8l-4 4v-4H1z" fill="#fff"/><path d="M3.500 6.500h11M3.500 9.500h11M3.500 12.500h6" stroke="#24262f" stroke-width="1.200"/><circle cx="17" cy="18" r="7.800" fill="#2c2d33" stroke="#999"/><text x="17" y="22" text-anchor="middle" font-size="11" fill="#fff">3</text></svg></div>
</footer>
</body>
</html>
```
FILE: styles.css
```
* { box-sizing: border-box; }
body { margin: 0; width: 1920px; height: 1080px; overflow: hidden; display: flex; flex-direction: column; background: #fff; font-family: Roboto, "Noto Sans CJK TC", sans-serif; color: #3c3c3c; }
svg { display: block; flex: none; }
.defs { position: absolute; width: 0; height: 0; }

.tabs { height: 34px; flex: none; display: flex; align-items: center; background: #202124; padding-left: 8px; font: 12px "Open Sans", "Noto Sans CJK TC", sans-serif; color: #fff; }
.tab { width: 239px; height: 34px; display: flex; align-items: center; padding: 0 7px 0 12px; position: relative; }
.tab span { flex: 1; margin-left: 8px; white-space: nowrap; letter-spacing: -.1px; }
.tab .mid { letter-spacing: 0; }
.tab .wider { letter-spacing: .08px; }
.tab:nth-child(n+2)::after { content: ""; position: absolute; right: -1px; top: 7px; width: 1px; height: 20px; background: #57595c; }
.tab-on { background: #35363a; border-radius: 8px 8px 0 0; }
.fav { width: 16px; height: 16px; }
.x { width: 16px; height: 16px; }
.plus { width: 16px; height: 16px; margin: 0 0 1px 15px; }
.winctl { margin-left: auto; display: flex; gap: 34px; padding: 0 17px 6px 0; }
.winctl svg { width: 12px; height: 12px; }

.nav { height: 37px; flex: none; display: flex; align-items: center; gap: 16px; padding: 0 14px 1px; background: #35363a; border-bottom: 1px solid #5a5b5e; }
.nav svg { width: 16px; height: 16px; }
.omni { width: 1672px; height: 28px; margin: 0 -2px 0 -2px; border-radius: 14px; background: #202124; display: flex; align-items: center; gap: 16px; padding: 0 10px 0 13px; }
.omni .lock { width: 10px; height: 14px; margin-right: -5px; }
.url { flex: 1; font: 14px "Open Sans", sans-serif; letter-spacing: .14px; color: #9aa0a6; white-space: nowrap; }
.url b { font-weight: 400; color: #fff; letter-spacing: .05px; }
.avatar { width: 22px; height: 22px; margin: 0 -3px; border-radius: 50%; background: #689f38; color: #fff; font-size: 12px; line-height: 22px; text-align: center; }

.apphead { height: 40px; flex: none; display: flex; align-items: center; background: #f8f9fb; padding: 0 5px 0 4px; }
.logo { width: 20px; height: 22px; }
.brand { width: 74px; margin-left: 7px; font: 18px Lato, sans-serif; color: #68696d; letter-spacing: .3px; padding-bottom: 5px; }
.burger { width: 16px; height: 15px; margin-left: 7px; }
.doc { width: 66px; margin-left: 11px; font-weight: 700; font-size: 23px; padding-top: 3px; color: #2b2b2b; }
.branch { width: 50px; font-size: 15.500px; color: #8c8c8c; padding-top: 7px; }
.link { width: 16px; height: 16px; margin: 0 0 0 -1px; }
.cap { width: 16px; height: 16px; margin-left: 39px; }
.btn { height: 33px; margin-top: -1px; border: 1px solid #1651b0; border-radius: 4px; font-size: 14.500px; line-height: 33px; text-align: center; letter-spacing: -.15px; }
.btn-fill { width: 143px; margin-left: auto; background: #1651b0; color: #fff; }
.btn-line { width: 70px; margin-left: 11px; background: #fff; color: #1651b0; }
.help { width: 18px; height: 18px; margin: 2px 8px 0 10px; border-radius: 50%; background: #666; color: #fff; font-size: 16px; font-weight: 700; line-height: 19px; text-align: center; }
.caret { border: 4px solid transparent; border-top-color: #222; margin-top: 5px; }

.app { flex: 1; display: flex; min-height: 0; }
.rail { width: 40px; border-right: 1px solid #ccc; border-top: 1px solid #ddd; background: #fafafa; display: flex; flex-direction: column; align-items: center; justify-content: space-between; padding: 7px 0 4px; }
.rail svg { width: 20px; height: 20px; }
.main { flex: 1; display: flex; flex-direction: column; }
.notice { height: 36px; padding-left: 9px; font-size: 14px; font-weight: 700; line-height: 38px; letter-spacing: .21px; }
.work { flex: 1; display: flex; min-height: 0; }
.panel { width: 206px; border: solid #ccc; border-width: 1px 1px 1px 0; display: flex; flex-direction: column; font-size: 14px; }
.ptitle { height: 30px; line-height: 31px; padding-left: 4px; font-weight: 500; letter-spacing: -.25px; }
.filter { height: 30px; display: flex; align-items: center; gap: 13px; padding-left: 11px; }
.filter svg { width: 15px; height: 16px; }
.field { width: 158px; height: 30px; border: 1px solid #bbb; border-radius: 2px; padding-left: 5px; font-style: italic; color: #888; line-height: 29px; font-size: 13.500px; letter-spacing: -.1px; white-space: nowrap; }
.listwrap { height: 500px; width: 200px; display: flex; border-bottom: 1px solid #ccc; }
.list { width: 183px; }
.row { height: 26px; display: flex; align-items: center; gap: 6px; padding-left: 5px; letter-spacing: -.35px; white-space: nowrap; }
.row svg { width: 16px; height: 16px; }
.row .chev { width: 12px; height: 8px; margin-right: 1px; }
.row.cjk { font-size: 13px; letter-spacing: .1px; padding-bottom: 2px; }
.row.cjk svg { margin-top: 1px; }
.row.head { padding-left: 4px; }
.row.sub { padding-left: 24.500px; gap: 4.500px; }
.row.dim { color: #999; }
.geo { position: relative; }
.geo::before { content: ""; position: absolute; left: 5px; top: 0; width: 9px; height: 103px; border-bottom: 1px solid #ccc; }
.geo::after { content: ""; position: absolute; left: 9px; top: 0; width: 1px; height: 103px; background: #ccc; }
.scroll { width: 17px; background: #f0f0f0; display: flex; flex-direction: column; align-items: center; }
.thumb { width: 13px; height: 89px; background: #c1c1c1; }
.up { border: 4px solid transparent; border-bottom-color: #888; margin: 2px 0 7px; }
.down { border: 4px solid transparent; border-top-color: #444; margin: auto 0 3px; }
.view { flex: 1; position: relative; }
.toggle { position: absolute; left: -1px; top: 406px; width: 33px; height: 34px; border: 1px solid #ccc; border-left-color: #fff; background: #fff; padding: 7px 6px; }
.toggle svg { width: 18px; height: 18px; }
.model { position: absolute; left: 454px; top: 123px; width: 800px; height: 670px; overflow: visible; }
.ink path { stroke: #1a242a; stroke-width: 3.5; stroke-linejoin: round; }
.ink path[stroke="none"] { stroke: none; }
.lt { fill: #8cb8d3; }
.md { fill: #7196aa; }
.dk { fill: #4e6675; }
.nf { fill: none; }
.planes path { fill: rgba(75, 125, 175, .06); stroke: #b3cbe6; stroke-width: 5; }
.pl path { fill: none; stroke: #5b93c9; stroke-opacity: .6; stroke-width: 5; }
.plabel { fill: #2455bd; stroke: #2455bd; font-family: Roboto, sans-serif; }
.w-side, .w-tire, .w-ring, .w-rim, .w-spoke { stroke: #141414; stroke-width: 4; }
.w-ring[opacity] { stroke: none; }
.w-light { stroke: #222; stroke-width: 2; }
.grey { --side: #77706c; --tire: #4c4b4b; --rim: url(#rimGrey); --lit: #ccc; --ring: #5d5c5b; }
.blue { --side: #2b468e; --tire: #1d2f5d; --rim: url(#rimBlue); --lit: #5878cb; --ring: #243a72; }
.w-side { fill: var(--side); }
.w-tire, .w-spoke { fill: var(--tire); }
.w-hub { fill: var(--tire); stroke: none; }
.w-ring { fill: var(--ring); }
.w-rim { fill: var(--rim); }
.w-light { fill: var(--lit); }
.cube { position: absolute; left: 1504px; top: 13px; width: 160px; height: 155px; }
.cube text { font-family: Roboto, sans-serif; }
.tools { position: absolute; left: 540px; top: 763px; width: 594px; height: 76px; border: 2px solid #ddd; background: #fff; display: flex; gap: 10px; padding: 5px; }
.tools div { width: 62px; height: 62px; border: 1px solid #f2f2f2; border-radius: 2px; display: flex; align-items: center; justify-content: center; }
.tools svg { width: 44px; height: 44px; }
.tools .wide { width: 76px; justify-content: flex-start; padding-left: 6px; }
.tools .dd { width: 12px; height: 8px; margin-left: 9px; }
.sheets { height: 30px; flex: none; background: #d0d0d0; display: flex; gap: 2px; padding-left: 5px; }
.sheet { width: 200px; height: 27px; background: #e8e8e8; border-radius: 0 0 4px 4px; display: flex; align-items: center; gap: 4px; padding-left: 11px; font-size: 15px; letter-spacing: -.45px; color: #666; }
.sheet svg { width: 18px; height: 18px; }
.sheet.on { height: 28px; background: #fff; color: #333; border-bottom: 2px solid #1651b0; }
.sheet.on span { padding-top: 2px; letter-spacing: -.55px; }

.taskbar { height: 40px; flex: none; background: #242530; display: flex; align-items: center; color: #fff; font-family: "Open Sans", "Noto Sans CJK TC", sans-serif; }
.tk { width: 48px; height: 40px; margin-right: 1px; display: flex; align-items: center; justify-content: center; position: relative; }
.tk:nth-child(-n+2) { margin-right: 0; }
.tk:nth-child(3) { margin-right: 3px; }
.tk svg { width: 24px; height: 24px; }
.run::after { content: ""; position: absolute; left: 4px; bottom: 0; width: 40px; height: 2px; background: #76b9ed; }
.two::after { background: linear-gradient(90deg, #76b9ed 31px, #4d7fa8 31px); }
.active { background: #51525b; }
.active::after { left: 0; width: 48px; }
.active svg { width: 28px; height: 28px; position: relative; left: 2px; top: 2px; }
.weather { margin-left: auto; width: 152px; display: flex; align-items: center; font-size: 15px; letter-spacing: -.5px; white-space: nowrap; }
.weather svg { width: 26px; height: 24px; margin-right: 7px; }
.weather .cond { margin-left: 9px; font-size: 14px; letter-spacing: 0; }
.weather span { padding-bottom: 1px; }
.tray { display: flex; align-items: center; gap: 8px; margin-right: 17px; }
.tray svg { width: 16px; height: 16px; }
.ime { font-size: 16px; margin-left: -2px; padding-bottom: 1px; }
.bopo { width: 15px; height: 15px; margin-left: 6px; background: #fff; color: #111; font-size: 12px; line-height: 15px; text-align: center; }
.clock { width: 60px; display: flex; flex-direction: column; align-items: center; font-size: 12px; line-height: 18px; letter-spacing: -.1px; white-space: nowrap; }
.note { width: 56px; padding: 0 0 0 18px; height: 40px; display: flex; align-items: center; border-right: 1px solid #777; margin-right: 4px; }
.note svg { width: 26px; height: 26px; }
```
